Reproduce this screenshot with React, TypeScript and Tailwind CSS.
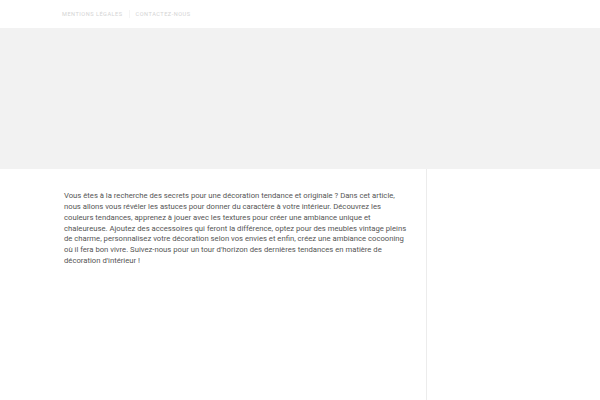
import React from 'react';

const App: React.FC = () => {
  return (
    <div className="w-[600px] h-[400px] overflow-hidden bg-white font-['Roboto',sans-serif]">
      <header className="h-[28px] flex items-center pl-[62px] gap-[6px] text-[5.6px] tracking-[0.09em] uppercase text-[#d4d4d4]">
        <a>Mentions légales</a>
        <span className="w-px h-[8px] bg-[#f5f5f5]" />
        <a>Contactez-nous</a>
      </header>
      <div className="h-[141px] bg-[#f2f2f2]" />
      <div className="flex h-[231px]">
        <main className="w-[426px] pl-[64px] pr-[14px] pt-[22px]">
          <p className="text-[7.7px] leading-[10.85px] text-[#555555]">
            Vous êtes à la recherche des secrets pour une décoration tendance et originale ? Dans cet article,
            nous allons vous révéler les astuces pour donner du caractère à votre intérieur. Découvrez les
            couleurs tendances, apprenez à jouer avec les textures pour créer une ambiance unique et
            chaleureuse. Ajoutez des accessoires qui feront la différence, optez pour des meubles vintage pleins
            de charme, personnalisez votre décoration selon vos envies et enfin, créez une ambiance cocooning
            où il fera bon vivre. Suivez-nous pour un tour d'horizon des dernières tendances en matière de
            décoration d'intérieur !
          </p>
        </main>
        <aside className="flex-1 border-l border-[#ececec]" />
      </div>
    </div>
  );
};

export default App;
